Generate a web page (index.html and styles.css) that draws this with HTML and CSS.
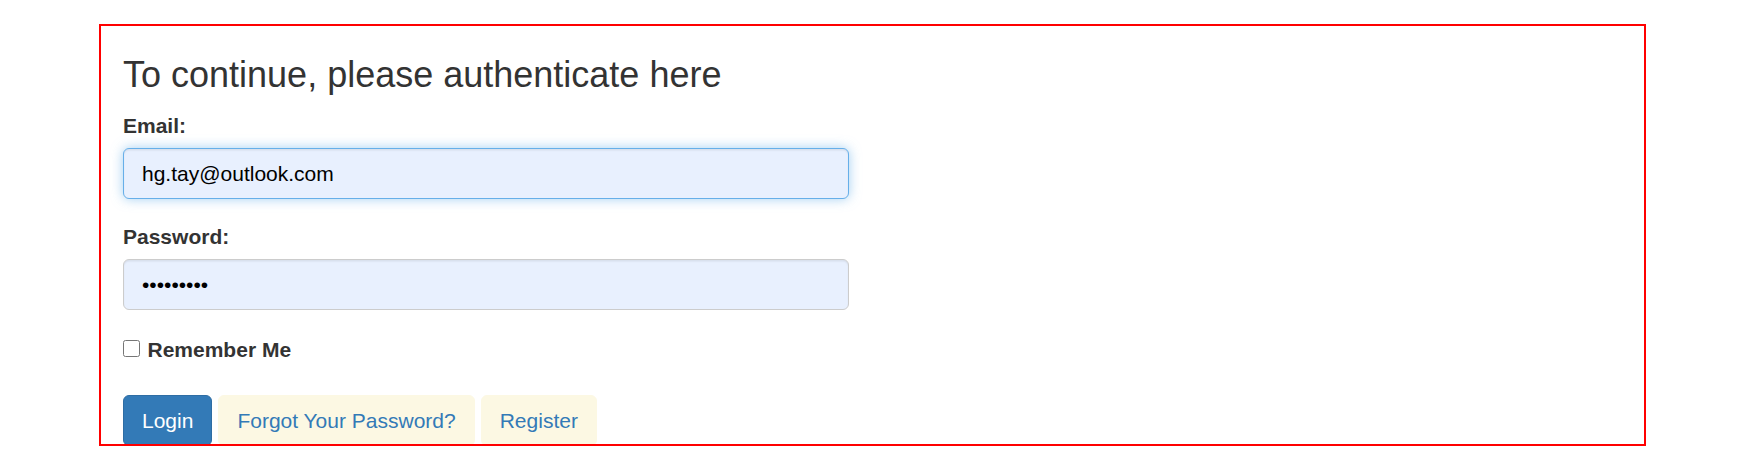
FILE: index.html
```html
<!DOCTYPE html>
<html lang="en">
<head>
<meta charset="utf-8">
<title>Login</title>
<link rel="stylesheet" href="styles.css">
</head>
<body>
<div class="panel">
  <h3 class="title">To continue, please authenticate here</h3>
  <form class="login-form">
    <div class="form-group">
      <label class="field-label" for="email">Email:</label>
      <input class="form-control is-focused" id="email" type="email" value="hg.tay@outlook.com">
    </div>
    <div class="form-group">
      <label class="field-label" for="password">Password:</label>
      <input class="form-control" id="password" type="password" value="123456789">
    </div>
    <div class="remember">
      <label class="remember-label"><input class="remember-box" type="checkbox">Remember Me</label>
    </div>
    <div class="actions">
      <button type="button" class="btn btn-primary">Login</button>
      <button type="button" class="btn btn-soft">Forgot Your Password?</button>
      <button type="button" class="btn btn-soft">Register</button>
    </div>
  </form>
</div>
</body>
</html>
```
FILE: styles.css
```css
html, body {
  margin: 0;
  padding: 0;
  background: #fff;
}
body {
  font-family: "Liberation Sans", Arial, Helvetica, sans-serif;
  font-size: 21px;
  line-height: 30px;
  color: #333;
  padding-top: 24px;
}
.panel {
  box-sizing: border-box;
  margin: 0 99px;
  height: 422px;
  border: 2px solid #ff0000;
  padding: 0 22px;
  overflow: hidden;
}
.title {
  margin: 28.5px 0 16.5px;
  font-size: 36px;
  line-height: 39.6px;
  font-weight: 500;
  color: #333;
}
.login-form {
  width: 726px;
}
.form-group {
  margin-bottom: 22.5px;
}
.field-label {
  display: block;
  font-weight: bold;
  margin-bottom: 7.5px;
  line-height: 30px;
}
.form-control {
  display: block;
  box-sizing: border-box;
  width: 100%;
  height: 51px;
  padding: 9px 18px;
  font-family: "Liberation Sans", Arial, Helvetica, sans-serif;
  font-size: 21px;
  line-height: 30px;
  color: #000;
  background: #e8f0fe;
  border: 1.5px solid #ccc;
  border-radius: 6px;
  box-shadow: inset 0 1.5px 1.5px rgba(0,0,0,.075);
  outline: none;
}
.form-control.is-focused {
  border-color: #66afe9;
  box-shadow: inset 0 1.5px 1.5px rgba(0,0,0,.075), 0 0 12px rgba(102,175,233,.6);
}
.remember {
  padding-top: 2.5px;
  line-height: 30px;
}
.remember-label {
  font-weight: bold;
}
.remember-box {
  width: 17px;
  height: 17px;
  margin: 0 7.5px 1px 0;
  vertical-align: baseline;
}
.actions {
  margin-top: 30px;
  display: flex;
  gap: 6px;
}
.btn {
  box-sizing: border-box;
  height: 51px;
  padding: 9px 18px;
  font-family: "Liberation Sans", Arial, Helvetica, sans-serif;
  font-size: 21px;
  line-height: 30px;
  border: 1.5px solid transparent;
  border-radius: 6px;
  cursor: pointer;
}
.btn-primary {
  color: #fff;
  background: #337ab7;
  border-color: #2e6da4;
}
.btn-soft {
  color: #337ab7;
  background: #fcf8e3;
  border-color: #fcf8e3;
}
```
